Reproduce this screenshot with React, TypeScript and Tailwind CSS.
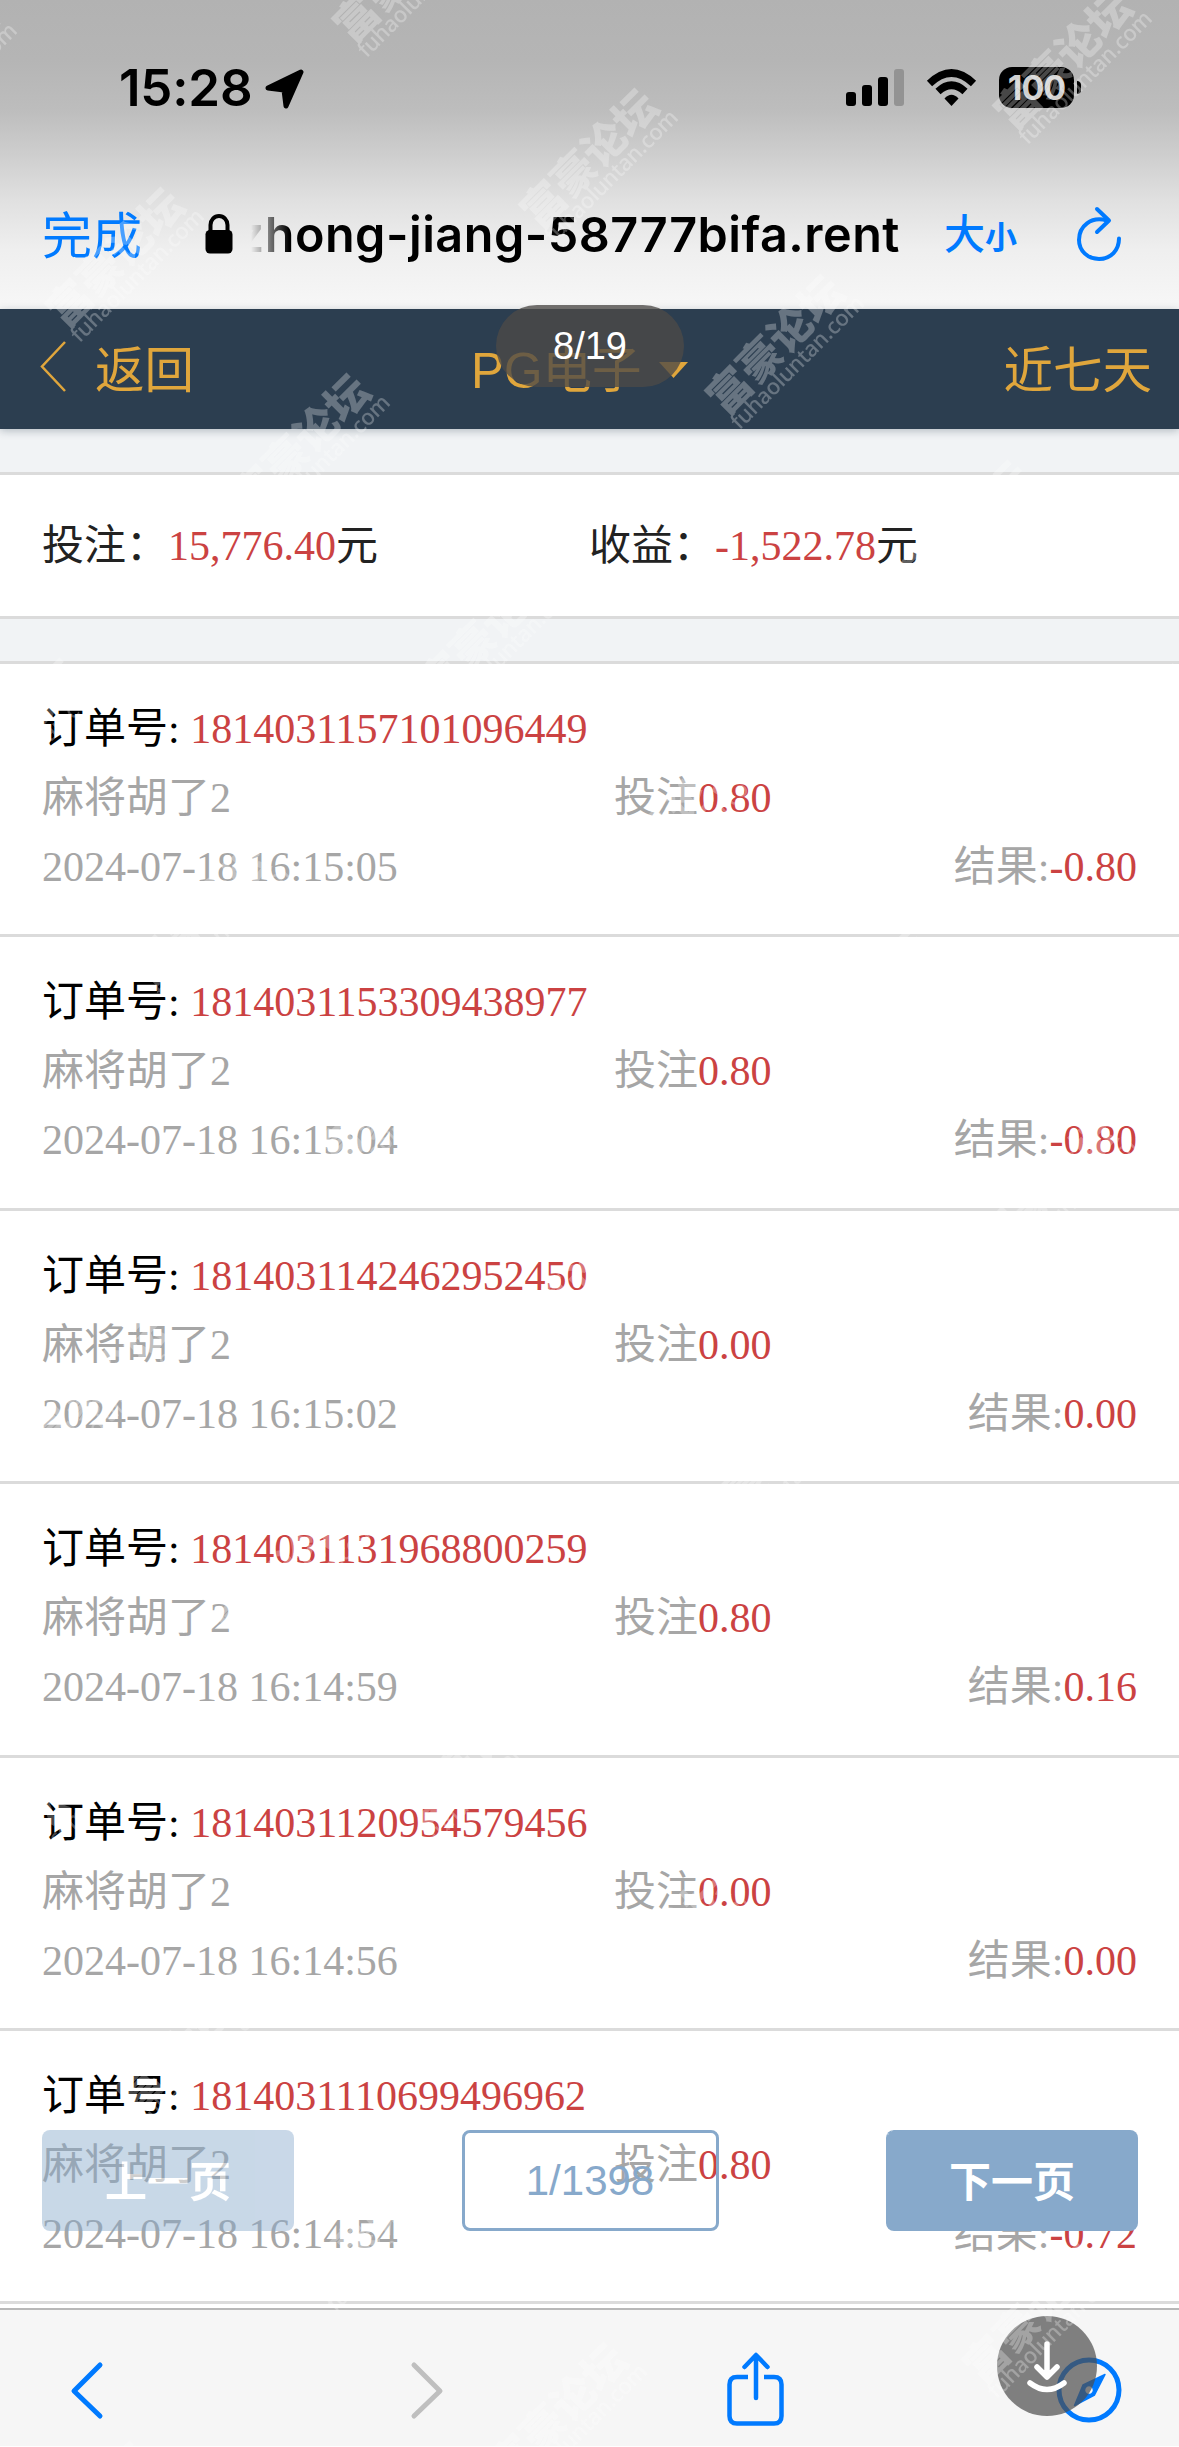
import React from "react";

const orders = [
  { id: "1814031157101096449", bet: "0.80", time: "2024-07-18 16:15:05", result: "-0.80" },
  { id: "1814031153309438977", bet: "0.80", time: "2024-07-18 16:15:04", result: "-0.80" },
  { id: "1814031142462952450", bet: "0.00", time: "2024-07-18 16:15:02", result: "0.00" },
  { id: "1814031131968800259", bet: "0.80", time: "2024-07-18 16:14:59", result: "0.16" },
  { id: "1814031120954579456", bet: "0.00", time: "2024-07-18 16:14:56", result: "0.00" },
  { id: "1814031110699496962", bet: "0.80", time: "2024-07-18 16:14:54", result: "-0.72" },
];

// Diagonal lattice of watermark anchor points covering the page.
const marks: { x: number; y: number }[] = [];
for (let a = -14; a <= 18; a++) {
  for (let b = -8; b <= 8; b++) {
    const x = 741 + a * 186.5 + b * 474;
    const y = 432 + a * 185.8 - b * 99;
    if (x > -170 && x < 1190 && y > 0 && y < 2600) marks.push({ x, y });
  }
}

function Watermarks() {
  return (
    <div className="pointer-events-none absolute inset-0 z-20 overflow-hidden text-white opacity-28">
      {marks.map((m) => (
        <div
          key={`${m.x}:${m.y}`}
          className="absolute h-[60px] w-[180px] origin-bottom-left -rotate-45 whitespace-nowrap"
          style={{ left: m.x, top: m.y - 60 }}
        >
          <div className="h-[38px] font-['Noto_Sans_CJK_SC',sans-serif] text-[43px] leading-[38px] font-black">富豪论坛</div>
          <div className="h-[22px] font-['Noto_Sans',sans-serif] text-[22px] leading-[22px] font-medium tracking-[-0.2px]">fuhaoluntan.com</div>
        </div>
      ))}
    </div>
  );
}

function StatusBar() {
  return (
    <div className="flex h-[176px] items-start pt-[67px] pr-[98px] pl-[119px]">
      <span className="h-[41px] w-[135px] font-[Inter,sans-serif] text-[51px] leading-[42px] font-semibold tracking-[-0.2px] text-black">15:28</span>
      <svg className="mt-[2px] ml-[10px] h-[40px] w-[41px]" viewBox="0 0 41 40">
        <path d="M37 3 L22 37 L20 21 L4 19 Z" fill="#000" stroke="#000" strokeWidth="5" strokeLinejoin="round" />
      </svg>
      <div className="mt-[2px] ml-auto flex h-[37px] items-end gap-[6px]">
        <div className="h-[14px] w-[10px] rounded-[3px] bg-black" />
        <div className="h-[21px] w-[10px] rounded-[3px] bg-black" />
        <div className="h-[29px] w-[10px] rounded-[3px] bg-black" />
        <div className="h-[37px] w-[10px] rounded-[3px] bg-[#939393]" />
      </div>
      <svg className="mt-[2px] ml-[22px] h-[38px] w-[51px]" viewBox="0 0 51 38">
        <path d="M3.5 14.5 Q25.5 -6.5 47.5 14.5" fill="none" stroke="#000" strokeWidth="7.5" />
        <path d="M12 22.5 Q25.5 10 39 22.5" fill="none" stroke="#000" strokeWidth="7.5" />
        <path d="M18.5 29.5 Q25.5 22 32.5 29.5 L25.5 37 Z" fill="#000" />
      </svg>
      <div className="ml-[22px] flex items-center">
        <div className="flex h-[41px] w-[75px] items-center justify-center rounded-[13px] bg-black font-[Inter,sans-serif] text-[34px] leading-none font-bold tracking-[-1px] text-[#d0d0d0]">100</div>
        <div className="ml-[3px] h-[13px] w-[4px] rounded-r-[4px] bg-black" />
      </div>
    </div>
  );
}

function AddressBar() {
  return (
    <div className="flex h-[120px] items-center pr-[57px] pl-[42px] font-['Noto_Sans_CJK_SC',sans-serif] text-[#007aff]">
      <span className="mt-[-9px] w-[100px] text-[50px] leading-[60px] whitespace-nowrap">完成</span>
      <svg className="mt-[-4px] ml-[63px] h-[40px] w-[28px]" viewBox="0 0 28 40">
        <rect x="0.5" y="16" width="27" height="23.5" rx="4.5" fill="#000" />
        <path d="M5.5 18 V11 a8.5 9 0 0 1 17 0 V18" fill="none" stroke="#000" strokeWidth="4" />
      </svg>
      <div className="mt-[-2px] ml-[10px] flex w-[657px] justify-end overflow-hidden mask-[linear-gradient(to_right,transparent_8px,black_46px)]">
        <span className="font-[Inter,sans-serif] text-[48.5px] leading-[60px] font-semibold tracking-[0.5px] whitespace-nowrap text-black">zhong-jiang-58777bifa.rent</span>
      </div>
      <div className="mt-[-6px] ml-[44px] flex w-[74px] items-baseline whitespace-nowrap">
        <span className="text-[41px] leading-[60px] font-medium">大</span>
        <span className="text-[32px] leading-[60px] font-bold">小</span>
      </div>
      <svg className="mt-[-4px] ml-auto h-[56px] w-[46px]" viewBox="0 0 46 56">
        <path d="M31 14.5 C15 10 3 20 3 34 C3 45 12 53 23 53 C35 53 43 44 43 32.5" fill="none" stroke="#007aff" strokeWidth="4" strokeLinecap="round" />
        <path d="M21 3 L33 14.5 L21 26" fill="none" stroke="#007aff" strokeWidth="4" strokeLinecap="round" strokeLinejoin="round" />
      </svg>
    </div>
  );
}

function TitleBar() {
  return (
    <div className="relative z-10 flex h-[120px] items-center justify-between bg-[#2c3e50] pt-[3px] pr-[27px] pl-[40px] font-['Liberation_Sans','Noto_Sans_CJK_SC',sans-serif] text-[49.5px] leading-[60px] whitespace-nowrap text-[#e0a63c] shadow-[0_2px_8px_rgba(44,62,80,0.3)]">
      <div className="flex w-[431px] items-center">
        <svg className="mt-[-8px] h-[51px] w-[26px]" viewBox="0 0 26 51">
          <path d="M25 1 L2 25.5 L25 50" fill="none" stroke="#e0a63c" strokeWidth="2.5" />
        </svg>
        <span className="ml-[29px]">返回</span>
      </div>
      <div className="flex items-center">
        <span>PG电子</span>
        <svg className="mt-[-2px] ml-[17px] h-[16px] w-[29px]" viewBox="0 0 29 16">
          <path d="M0 0 H29 L14.5 16 Z" fill="#e0a63c" />
        </svg>
      </div>
      <span className="ml-auto">近七天</span>
    </div>
  );
}

function Toolbar() {
  return (
    <div className="relative flex h-[138px] items-start border-t-2 border-[#b8b8b8] bg-[#f6f6f6] pt-[39px] pl-[69px]">
      <svg className="mt-[11px] h-[60px] w-[36px]" viewBox="0 0 36 60">
        <path d="M31 5 L5 31 L31 56" fill="none" stroke="#007aff" strokeWidth="5" strokeLinecap="round" strokeLinejoin="round" />
      </svg>
      <svg className="mt-[11px] ml-[304px] h-[60px] w-[36px]" viewBox="0 0 36 60">
        <path d="M5 5 L31 31 L5 56" fill="none" stroke="#bfbfbf" strokeWidth="5" strokeLinecap="round" strokeLinejoin="round" />
      </svg>
      <svg className="mt-[2px] ml-[281px] h-[76px] w-[60px]" viewBox="0 0 60 76">
        <path d="M22 26 H11 Q3.5 26 3.5 33.5 V65 Q3.5 72.5 11 72.5 H48 Q55.5 72.5 55.5 65 V33.5 Q55.5 26 48 26 H38" fill="none" stroke="#007aff" strokeWidth="4.5" />
        <path d="M30 47 V5 M18.5 16 L30 4 L41.5 16" fill="none" stroke="#007aff" strokeWidth="4.5" strokeLinecap="round" strokeLinejoin="round" />
      </svg>
      <svg className="mt-[8px] ml-[270px] h-[66px] w-[66px]" viewBox="0 0 66 66">
        <circle cx="33" cy="33" r="30" fill="none" stroke="#007aff" strokeWidth="5" />
        <path fillRule="evenodd" d="M49 17.5 L38.5 38 L18.5 48.5 L27 28 Z M33 28.5 a4.5 4.5 0 1 0 0.01 0 Z" fill="#007aff" stroke="#007aff" strokeWidth="1.5" strokeLinejoin="round" />
      </svg>
      <div className="absolute top-[6px] left-[997px] size-[100px] rounded-full bg-[#4d4d4d]/70">
        <svg className="size-full" viewBox="0 0 100 100" fill="none" stroke="#fff" strokeWidth="5.5" strokeLinecap="round" strokeLinejoin="round">
          <path d="M50 28 V60 M40 51 L50 61 L60 51" />
          <path d="M33 67 Q50 80 67 67" />
        </svg>
      </div>
    </div>
  );
}

export default function App() {
  return (
    <div className="relative flex h-[2447px] w-[1179px] flex-col overflow-hidden bg-white font-['Liberation_Serif','Noto_Sans_CJK_SC',serif] text-[42px]">
      <div className="h-[309px] bg-[linear-gradient(to_bottom,#b2b2b2_0px,#b5b5b5_60px,#bdbdbd_110px,#cecece_155px,#e0e0e0_200px,#efefef_250px,#f7f7f7_309px)]">
        <StatusBar />
        <AddressBar />
      </div>
      <TitleBar />
      <div className="h-[43px] bg-[#f1f3f5]" />
      <div className="flex h-[147px] items-center border-y-[3px] border-[#dbdbdb] pl-[42px] leading-[60px] whitespace-nowrap text-[#222]">
        <div className="w-[547px]">投注：<span className="text-[#cb4242]">15,776.40</span>元</div>
        <div>收益：<span className="text-[#cb4242]">-1,522.78</span>元</div>
      </div>
      <div className="h-[42px] bg-[#f1f3f5]" />
      <div className="h-[1647px] border-t-[3px] border-[#dbdbdb]">
        {orders.map((o) => (
          <div key={o.id} className="h-[273.4px] border-b-[3px] border-[#dbdbdb] px-[42px] pt-[31px] leading-[69px] whitespace-nowrap text-[#a6a6a6]">
            <div className="h-[69px] text-black">订单号: <span className="text-[#cb4242]">{o.id}</span></div>
            <div className="flex h-[69px]">
              <span className="w-[572px]">麻将胡了2</span>
              <span>投注<span className="text-[#cb4242]">{o.bet}</span></span>
            </div>
            <div className="flex h-[69px] justify-between">
              <span>{o.time}</span>
              <span>结果:<span className="text-[#cb4242]">{o.result}</span></span>
            </div>
          </div>
        ))}
      </div>
      <Toolbar />
      <div className="absolute top-[2130px] left-[42px] flex h-[101px] w-[1096px] justify-between font-['Liberation_Sans','Noto_Sans_CJK_SC',sans-serif] text-[42px]">
        <div className="flex w-[252px] items-center justify-center rounded-[8px] bg-[#87a9cb] pb-[5px] font-['Noto_Sans_CJK_SC',sans-serif] font-bold text-white opacity-45">上一页</div>
        <div className="flex w-[257px] items-center justify-center rounded-[8px] border-[3px] border-[#87a9cb] text-[#87a9cb]">1/1398</div>
        <div className="flex w-[252px] items-center justify-center rounded-[8px] bg-[#87a9cb] pb-[5px] font-['Noto_Sans_CJK_SC',sans-serif] font-bold text-white">下一页</div>
      </div>
      <div className="absolute top-[305px] left-[496px] z-30 flex h-[82px] w-[188px] items-center justify-center rounded-full bg-[#4d4a48]/78 font-['Liberation_Sans',sans-serif] text-[38px] text-white">8/19</div>
      <Watermarks />
    </div>
  );
}
